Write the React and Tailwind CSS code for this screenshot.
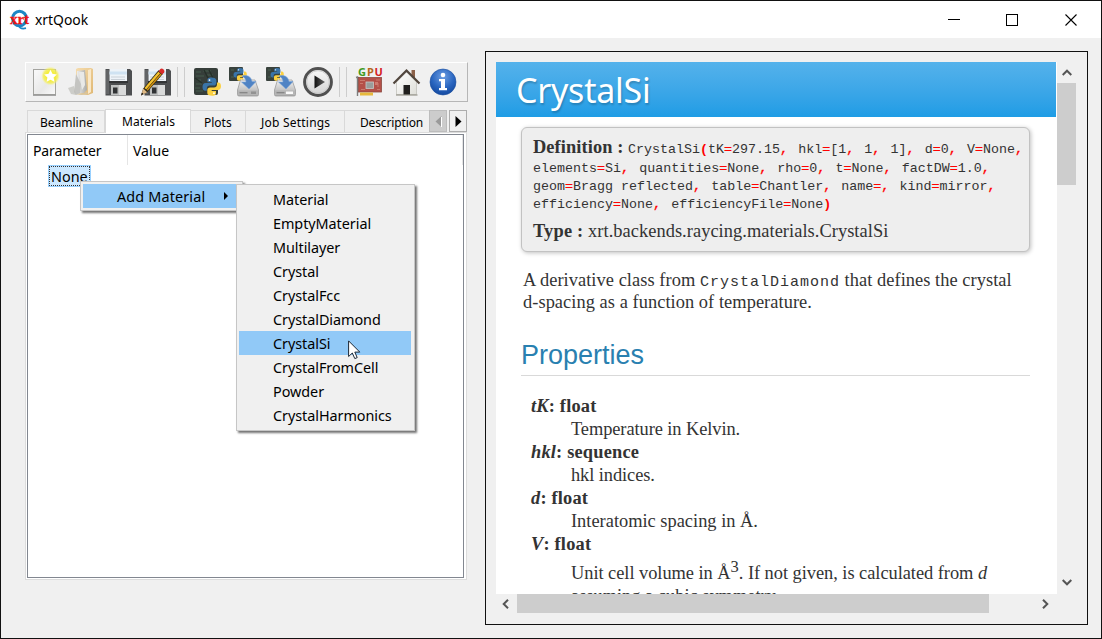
import React from "react";

const UI = "font-['Noto_Sans',sans-serif]";

/* ---------- toolbar drawings ---------- */
function Icon({ children }) {
  return (
    <svg width="30" height="30" viewBox="0 0 30 30" className="shrink-0 block overflow-visible">
      {children}
    </svg>
  );
}

function NewFile() {
  return (
    <Icon>
      <defs>
        <linearGradient id="paper" x1="0" y1="0" x2="1" y2="1">
          <stop offset="0" stopColor="#fafafa" />
          <stop offset=".6" stopColor="#e8e8e8" />
          <stop offset="1" stopColor="#fafafa" />
        </linearGradient>
        <radialGradient id="glow">
          <stop offset=".45" stopColor="#f4ee3a" />
          <stop offset=".75" stopColor="#f4ee50" stopOpacity=".8" />
          <stop offset="1" stopColor="#f8f490" stopOpacity="0" />
        </radialGradient>
      </defs>
      <rect x="3.500" y="2.500" width="22" height="25" fill="url(#paper)" stroke="#a4a4a0" />
      <path d="M3 28.3h23" stroke="#777" strokeWidth=".8" />
      <circle cx="20.500" cy="9" r="9.5" fill="url(#glow)" />
      <path d="M20.500 2.800l1.900 4 4.400.6-3.200 3 .8 4.400-3.900-2.100-3.900 2.100.8-4.400-3.200-3 4.400-.6z" fill="#fff" />
    </Icon>
  );
}

function OpenFolder() {
  return (
    <Icon>
      <defs>
        <linearGradient id="fold" x1="0" y1="0" x2="1" y2="1">
          <stop offset="0" stopColor="#f5dcae" />
          <stop offset="1" stopColor="#e0b874" />
        </linearGradient>
        <linearGradient id="flap" x1="0" y1="0" x2="1" y2="0">
          <stop offset="0" stopColor="#f4f4f4" />
          <stop offset="1" stopColor="#aaaaa6" />
        </linearGradient>
      </defs>
      <path d="M9 2l2-1h13l2 1v24l-5 2-12-1z" fill="url(#fold)" />
      <path d="M21 3l3-1v23l-3 2z" fill="#fae8c8" />
      <path d="M10 4l8-1 2 20-3 3-8 1z" fill="url(#flap)" />
      <path d="M9 7l5 10-1 9-4 2-2-3z" fill="#c4c4c1" />
      <path d="M12 5l5 0 1 13-3 5z" fill="#e9e9e7" />
      <path d="M1 21l6-2 2 9-5-1z" fill="#bdbdb8" opacity=".7" />
      <path d="M8 28l7-1 5-2 1 2-7 1z" fill="#d6c49f" />
    </Icon>
  );
}

function Floppy() {
  return (
    <>
      <path d="M1.5 2h24.500l2 2v24.500h-26.500z" fill="#4d4f51" />
      <path d="M2 3h3v24h-3z" fill="#626466" />
      <rect x="5.500" y="2" width="17.500" height="12" fill="#eef3f8" />
      <path d="M5.500 4.500h17.500v3h-17.500z" fill="#cfe2f2" />
      <path d="M7 10h14M7 12.500h14" stroke="#c9d0d7" />
      <rect x="5" y="14" width="19" height="2" fill="#323436" />
      <rect x="7" y="18" width="15" height="10" fill="#bfc1c1" />
      <rect x="15" y="18" width="7" height="10" fill="#d9dada" />
      <rect x="9" y="20.500" width="4.500" height="6" fill="#303234" />
    </>
  );
}

function Save() {
  return (
    <Icon>
      <Floppy />
    </Icon>
  );
}

function SaveAs() {
  return (
    <Icon>
      <g transform="translate(2 0)">
        <Floppy />
      </g>
      <path d="M0 28.500l2.200-7L17.500 3.200l4.500 3.600L6.200 25.200z" fill="#2b2615" />
      <path d="M3.500 21L17.300 4.700l1.800 1.500L5.200 22.500z" fill="#f5c12e" />
      <path d="M5.600 22.800L19.500 6.500l1.100.9L6.700 23.800z" fill="#d1900f" />
      <path d="M0 28.500l2.200-7 4 3.700z" fill="#dfb985" />
      <path d="M0 28.500l1-3 1.500 1.500z" fill="#111" />
      <path d="M17.500 4.200l1.800-2.200q1.500-1 3.300.5 1.500 1.500.5 3l-1.800 2.100z" fill="#d92b2b" />
    </Icon>
  );
}

function Snake() {
  return (
    <>
      <path d="M8.800 0C5.600 0 5 1.400 5 2.800v2h4.300v.8H3C1.200 5.600 0 7.200 0 9.400s1 3.800 2.600 3.800h1.700v-2.100c0-1.800 1.300-3 3-3h4c1.500 0 2.500-1.200 2.500-2.600V2.800C13.800 1.100 12.200 0 8.800 0z" fill="#3a74a8" />
      <path d="M9.700 18.200c3.200 0 3.800-1.400 3.800-2.800v-2H9.200v-.8h6.300c1.800 0 3-1.600 3-3.800S17.500 5 15.900 5h-1.400v2c0 1.800-1.300 3-3 3h-4c-1.500 0-2.700 1.200-2.700 2.600v2.800c0 1.700 1.600 2.800 4.900 2.800z" fill="#fbd040" />
      <circle cx="7" cy="2.600" r=".9" fill="#fff" />
      <circle cx="11.500" cy="15.700" r=".9" fill="#fff" />
    </>
  );
}

function CodeBlock() {
  return (
    <>
      <rect x="2" y="1" width="24" height="27" rx="2" fill="#363e3a" />
      <path d="M4 5h5M11 4h8M4 9h8M14 8h7M5 13h4M4 17h6M3 21h5M4 24h7M19 12h4" stroke="#455c4d" strokeWidth="1.200" />
      <path d="M12 3l4 8M17 3l4 8M3 11l7 5" stroke="#263029" strokeWidth="1.500" />
    </>
  );
}

function PythonCode() {
  return (
    <Icon>
      <CodeBlock />
      <g transform="translate(10.500 10.500)">
        <Snake />
      </g>
    </Icon>
  );
}

function PythonSave({ as }) {
  return (
    <Icon>
      <rect x="0" y="0" width="14" height="14" rx="1" fill="#39423d" />
      <path d="M2 3h3M2 10h3" stroke="#4c6353" />
      <g transform="translate(4.500 1) scale(.72)">
        <Snake />
      </g>
      <defs>
        <linearGradient id="disk" x1="0" y1="0" x2="0" y2="1">
          <stop offset="0" stopColor="#f2f2f2" />
          <stop offset="1" stopColor="#a8a8a8" />
        </linearGradient>
      </defs>
      <path d="M11.500 13h14.500l3.500 10v4.500q0 1.500-1.500 1.500H10q-1.500 0-1.500-1.500V23z" fill="url(#disk)" stroke="#9c9c9c" strokeWidth=".8" />
      <path d="M9 23.500h20v4.500H9z" fill="#b5b5b5" />
      <path d="M10.500 25.700h8" stroke="#858585" strokeWidth="1.300" />
      <rect x={as ? 20 : 22} y="24.500" width={as ? 7 : 5} height="2.500" fill={as ? "#fafafa" : "#929292"} />
      <path d="M13 9c5-1.500 9 .5 10 5.500h4L20 22l-7.500-7H17c0-3-1.500-4.500-4-6z" fill="#4f83c4" stroke="#7ba5d8" strokeWidth=".6" />
    </Icon>
  );
}

function Play() {
  return (
    <Icon>
      <defs>
        <linearGradient id="knob" x1="0" y1="0" x2="0" y2="1">
          <stop offset="0" stopColor="#fafafa" />
          <stop offset="1" stopColor="#d2d2d2" />
        </linearGradient>
        <linearGradient id="tri" x1="0" y1="0" x2="1" y2="0">
          <stop offset="0" stopColor="#111" />
          <stop offset="1" stopColor="#666" />
        </linearGradient>
      </defs>
      <circle cx="15" cy="15" r="13.400" fill="url(#knob)" stroke="#505050" strokeWidth="3" />
      <circle cx="15" cy="15" r="11.300" fill="none" stroke="#c4c4c4" strokeWidth=".8" />
      <path d="M11.500 8.500v13L22 15z" fill="url(#tri)" />
    </Icon>
  );
}

function Gpu() {
  return (
    <Icon>
      <g className="font-['Noto_Sans',sans-serif] font-bold text-[11px]">
        <text x="4" y="9" fill="#3f9a1e">G</text>
        <text x="13" y="9" fill="#b5661c">P</text>
        <text x="20.500" y="9" fill="#d5201e">U</text>
      </g>
      <path d="M2 10.500l1.500-.5v19" fill="none" stroke="#7d7d7d" strokeWidth="1.400" />
      <rect x="4.500" y="10.500" width="23" height="14.500" fill="#b45048" stroke="#8b4a40" strokeWidth=".8" />
      <path d="M6 13.500h5M6 16.500h3M22 13h4M7 22.500h4M23 22.500h3M24 16v4" stroke="#cf8577" strokeWidth=".8" />
      <rect x="12" y="15" width="7.500" height="6.500" fill="#9a9d9b" stroke="#c9c9c5" strokeWidth=".8" />
      <rect x="21" y="15" width="3" height="3" fill="#cf7a6f" />
      <path d="M6 25.500h13v3H6z" fill="#e7b93c" />
    </Icon>
  );
}

function Home() {
  return (
    <Icon>
      <defs>
        <linearGradient id="wall" x1="0" y1="0" x2="1" y2="1">
          <stop offset="0" stopColor="#fff" />
          <stop offset="1" stopColor="#dfdfd9" />
        </linearGradient>
      </defs>
      <rect x="20.500" y="3" width="3.500" height="8" fill="#8b6048" />
      <path d="M5.500 15L15.500 5l10 10v12.500H5.500z" fill="url(#wall)" stroke="#bcbcb4" strokeWidth=".7" />
      <path d="M2.500 16.500L15.500 3.500l13 13" fill="none" stroke="#51463d" strokeWidth="2.200" />
      <rect x="12.500" y="18" width="6.500" height="10" fill="#201f1d" />
      <path d="M5 28h21.500" stroke="#98968c" strokeWidth="1.200" />
    </Icon>
  );
}

function Info() {
  return (
    <Icon>
      <defs>
        <radialGradient id="ball" cx=".5" cy=".3" r=".7">
          <stop offset="0" stopColor="#6d9ee2" />
          <stop offset=".6" stopColor="#2a66c0" />
          <stop offset="1" stopColor="#14499f" />
        </radialGradient>
      </defs>
      <circle cx="15" cy="15" r="13" fill="url(#ball)" stroke="#1c4f9f" strokeWidth=".6" />
      <circle cx="15" cy="8" r="2.300" fill="#fff" />
      <path d="M11 12h6v9h2v2.200h-8V21h2v-6.800h-2z" fill="#fff" />
    </Icon>
  );
}

function Separator() {
  return <div className="-ml-px h-[30px] w-[8px] shrink-0 border-x border-[#cdcdcd]" />;
}

/* ---------- window ---------- */
function TitleBar() {
  return (
    <div className="flex h-[37px] shrink-0 items-center bg-white pl-[9px]">
      <svg width="20" height="20" viewBox="0 0 20 20" className="block overflow-visible">
        <ellipse cx="9.500" cy="8.500" rx="6.900" ry="7.200" fill="#fff" stroke="#1c86c4" strokeWidth="3" />
        <path d="M8.500 15.500c1.500 3.500 4.500 3.500 7.500 2.700" fill="none" stroke="#1c86c4" strokeWidth="1.800" />
        <text x="0" y="13.500" textLength="19" lengthAdjust="spacingAndGlyphs" fill="#f01414" stroke="#f01414" strokeWidth=".3" className="font-['Liberation_Serif',serif] text-[15px] font-bold">xrt</text>
      </svg>
      <span className={`${UI} ml-[5px] grow text-[13.900px] leading-[20px] text-black`}>xrtQook</span>
      <svg width="130" height="14" viewBox="0 0 130 14" className="mr-[24px] block" fill="none" stroke="#000">
        <path d="M1 6.500h12" />
        <rect x="59.500" y="1.500" width="11" height="11" />
        <path d="M118.500 1.500l11 11M129.500 1.500l-11 11" strokeWidth="1.100" />
      </svg>
    </div>
  );
}

function Toolbar() {
  return (
    <div className="flex h-[40px] w-[443px] items-center gap-[7px] border border-t-white border-l-white border-r-[#b6b6b6] border-b-[#b6b6b6] pl-[4px]">
      <NewFile />
      <OpenFolder />
      <Save />
      <SaveAs />
      <Separator />
      <PythonCode />
      <PythonSave />
      <PythonSave as />
      <Play />
      <Separator />
      <Gpu />
      <Home />
      <Info />
    </div>
  );
}

function Tabs() {
  const tab = "flex h-[22px] shrink-0 items-center border-t border-r border-[#d9d9d9] bg-[#f0f0f0] pt-[2px]";
  return (
    <div className={`${UI} relative ml-[2px] flex h-[24px] w-[440px] items-end overflow-hidden text-[12px] leading-[16px] text-black`}>
      <div className={`${tab} w-[78px] border-l pl-[12px] mb-px`}>Beamline</div>
      <div className="z-10 flex h-[24px] w-[86px] shrink-0 items-center border border-b-0 border-[#d9d9d9] bg-white pl-[16px] tracking-[0.080px]">Materials</div>
      <div className={`${tab} w-[55px] pl-[13px] mb-px`}>Plots</div>
      <div className={`${tab} w-[99px] pl-[15px] tracking-[0.220px] mb-px`}>Job Settings</div>
      <div className={`${tab} w-[110px] pl-[15px] tracking-[-0.140px] mb-px`}>Description</div>
      <div className="absolute right-0 bottom-px z-20 flex gap-[2px] bg-[#f0f0f0] text-black">
        <div className="flex h-[22px] w-[18px] items-center justify-center border border-[#bcbcbc] bg-[#cccccc]">
          <svg width="7" height="11" viewBox="0 0 7 11"><path d="M6.500 0v11L.5 5.500z" fill="#9a9a9a" /><path d="M6.500 1v10" stroke="#fff" /></svg>
        </div>
        <div className="flex h-[22px] w-[18px] items-center justify-center border border-[#adadad] bg-[#f0f0f0]">
          <svg width="7" height="11" viewBox="0 0 7 11"><path d="M.5 0v11l6-5.500z" fill="#000" /></svg>
        </div>
      </div>
    </div>
  );
}

function Tree() {
  return (
    <div className="h-[448px] w-[442px] border border-[#dcdcdc] bg-white p-px">
      <div className={`${UI} h-[444px] w-[437px] border border-[#828790] bg-white text-[14px] text-black`}>
        <div className="flex h-[30px] leading-[31px]">
          <div className="w-[100px] border-r border-[#e5e5e5] pl-[5px] tracking-[-0.100px]">Parameter</div>
          <div className="grow border-r border-[#e5e5e5] pl-[5px]">Value</div>
        </div>
        <div className="ml-[20px] flex h-[22px] w-[43px] border border-[#99d1ff] bg-[#cce8ff]">
          <div className="w-full border border-dotted border-[#333] pl-px text-[14.400px] leading-[19px]">None</div>
        </div>
      </div>
    </div>
  );
}

const materials = [
  "Material", "EmptyMaterial", "Multilayer", "Crystal", "CrystalFcc",
  "CrystalDiamond", "CrystalSi", "CrystalFromCell", "Powder", "CrystalHarmonics",
];

function Menus() {
  const box = "absolute border border-[#c6c6c6] bg-[#f0f0f0] p-[2px] shadow-[2px_2px_2px_rgba(0,0,0,0.55)]";
  return (
    <div className={`${UI} text-[14.400px] leading-[25px] text-black`}>
      <div className={`${box} left-[80px] top-[181px] h-[30px] w-[163px]`}>
        <div className="flex h-[24px] items-center bg-[#91c9f7] pl-[34px] tracking-[0.150px]">
          <span className="w-[107px]">Add Material</span>
          <svg width="4" height="8" viewBox="0 0 4 8"><path d="M0 0v8l4-4z" fill="#000" /></svg>
        </div>
      </div>
      <div className={`${box} left-[236px] top-[184px] h-[247px] w-[179px] tracking-[-0.050px]`}>
        {materials.map((m) => (
          <div key={m} className={m === "CrystalSi" ? "h-[24px] w-[172px] bg-[#91c9f7] pl-[34px]" : "h-[24px] pl-[34px]"}>{m}</div>
        ))}
      </div>
      <svg width="13" height="20" viewBox="0 0 13 20" className="absolute left-[348px] top-[340px]">
        <path d="M.6.9v15.600l3.700-3.500 2.500 5.600 2.400-1-2.400-5.500h5z" fill="#fff" stroke="#1c2733" strokeWidth="1" />
      </svg>
    </div>
  );
}

/* ---------- documentation panel ---------- */
const signature = [
  "elements=Si, quantities=None, rho=0, t=None, factDW=1.0,",
  "geom=Bragg reflected, table=Chantler, name=, kind=mirror,",
  "efficiency=None, efficiencyFile=None)",
];

function Code({ text }) {
  return text.split(/([=,()])/).map((part, i) => {
    if (part === "=") return <span key={i} className="text-[#ff0000] [-webkit-text-stroke:0.300px_#ff0000]">=</span>;
    if (part === ",") return <span key={i} className="mr-[2.200px] text-[#ff0000] [-webkit-text-stroke:0.300px_#ff0000]">,</span>;
    if (part === "(" || part === ")") return <b key={i} className="text-[#ff0000]">{part}</b>;
    return <span key={i}>{part}</span>;
  });
}

function Term({ name, type }) {
  return <dt className="h-[23px] pl-[10px] font-bold tracking-[0.180px]"><i>{name}</i>: {type}</dt>;
}

function Doc() {
  const mono = "font-['Liberation_Mono',monospace] whitespace-pre text-[13.333px]";
  return (
    <div className="h-[532px] w-[561px] overflow-hidden bg-white font-['Liberation_Serif',serif] text-[18.400px] leading-[22px] text-[#333333]">
      <div className="h-[55px] w-[560px] bg-linear-to-b from-[#54b2eb] to-[#1d9ce5] pl-[20px] font-['Noto_Sans',sans-serif] text-[34px] leading-[56px] tracking-[-0.250px] text-white [text-shadow:1px_2px_2px_rgba(0,0,0,0.2)]">CrystalSi</div>
      <div className="mx-[25px] w-[509px]">
        <div className="mt-[10px] h-[125px] rounded-[6px] border border-[#c2c2c2] bg-[#eeeeee] pt-[8px] pl-[11px] shadow-[1px_1px_4px_rgba(0,0,0,0.25)] whitespace-nowrap">
          <div className="h-[24px]"><b className="tracking-[0.080px]">Definition :</b> <span className={mono}><Code text="CrystalSi(tK=297.15, hkl=[1, 1, 1], d=0, V=None," /></span></div>
          {signature.map((line) => (
            <div key={line} className={`${mono} h-[18px] leading-[18px]`}><Code text={line} /></div>
          ))}
          <div className="mt-[6px] tracking-[0.050px]"><b className="tracking-[0.200px]">Type :</b> xrt.backends.raycing.materials.CrystalSi</div>
        </div>
        <p className="mt-[17px] h-[44px] pl-[2px] tracking-[0.050px] whitespace-nowrap">
          A derivative class from <span className="font-['Liberation_Mono',monospace] text-[15px] leading-[0px] tracking-[1px]">CrystalDiamond</span> that defines the crystal<br />
          d-spacing as a function of temperature.
        </p>
        <h2 className="mt-[27px] h-[36px] border-b border-[#d9d9d9] font-['Liberation_Sans',sans-serif] text-[27px] leading-[30px] text-[#2980b0]">Properties</h2>
        <dl className="mt-[19px] leading-[23px] whitespace-nowrap">
          <Term name="tK" type="float" />
          <dd className="h-[23px] pl-[50px] tracking-[-0.080px]">Temperature in Kelvin.</dd>
          <Term name="hkl" type="sequence" />
          <dd className="h-[23px] pl-[50px] tracking-[-0.080px]">hkl indices.</dd>
          <Term name="d" type="float" />
          <dd className="h-[23px] pl-[50px]">Interatomic spacing in Å.</dd>
          <Term name="V" type="float" />
          <dd className="mt-[6px] pl-[50px]">
            <div className="h-[23px] tracking-[-0.040px]">Unit cell volume in Å<span className="inline-block align-[7px] text-[16.500px] leading-[10px]">3</span>. If not given, is calculated from <i>d</i></div>
            <div>assuming a cubic symmetry.</div>
          </dd>
        </dl>
      </div>
    </div>
  );
}

function Chevron({ d }) {
  return (
    <svg width="10" height="10" viewBox="0 0 10 10" className="block" fill="none" stroke="#555555" strokeWidth="2">
      <path d={d} />
    </svg>
  );
}

function DocPanel() {
  return (
    <div className="h-[574px] w-[603px] border border-[#111111] bg-[#f0f0f0] pt-[10px] pl-[10px]">
      <div className="flex">
        <Doc />
        <div className="flex h-[532px] w-[19px] flex-col items-center bg-[#f0f0f0]">
          <div className="flex h-[21px] items-center"><Chevron d="M.7 7L5 2.700 9.300 7" /></div>
          <div className="h-[102px] w-full bg-[#cdcdcd]" />
          <div className="flex grow items-end pb-[7px]"><Chevron d="M.7 3L5 7.300 9.300 3" /></div>
        </div>
      </div>
      <div className="flex h-[19px] w-[561px] items-center">
        <div className="flex w-[21px] justify-center pr-[2px]"><Chevron d="M7 .7L2.700 5 7 9.300" /></div>
        <div className="h-full w-[472px] bg-[#cdcdcd]" />
        <div className="flex grow justify-end pr-[7px]"><Chevron d="M3 .7L7.300 5 3 9.300" /></div>
      </div>
    </div>
  );
}

export default function App() {
  return (
    <div className="relative flex h-[639px] w-[1102px] flex-col overflow-hidden border border-[#111111] bg-[#f0f0f0]">
      <TitleBar />
      <div className="flex pl-[24px]">
        <div className="flex w-[460px] flex-col pt-[24px]">
          <Toolbar />
          <div className="mt-[7px]"><Tabs /></div>
          <div className="-mt-px"><Tree /></div>
        </div>
        <div className="pt-[13px]"><DocPanel /></div>
      </div>
      <div className="absolute -top-px -left-px"><Menus /></div>
    </div>
  );
}
